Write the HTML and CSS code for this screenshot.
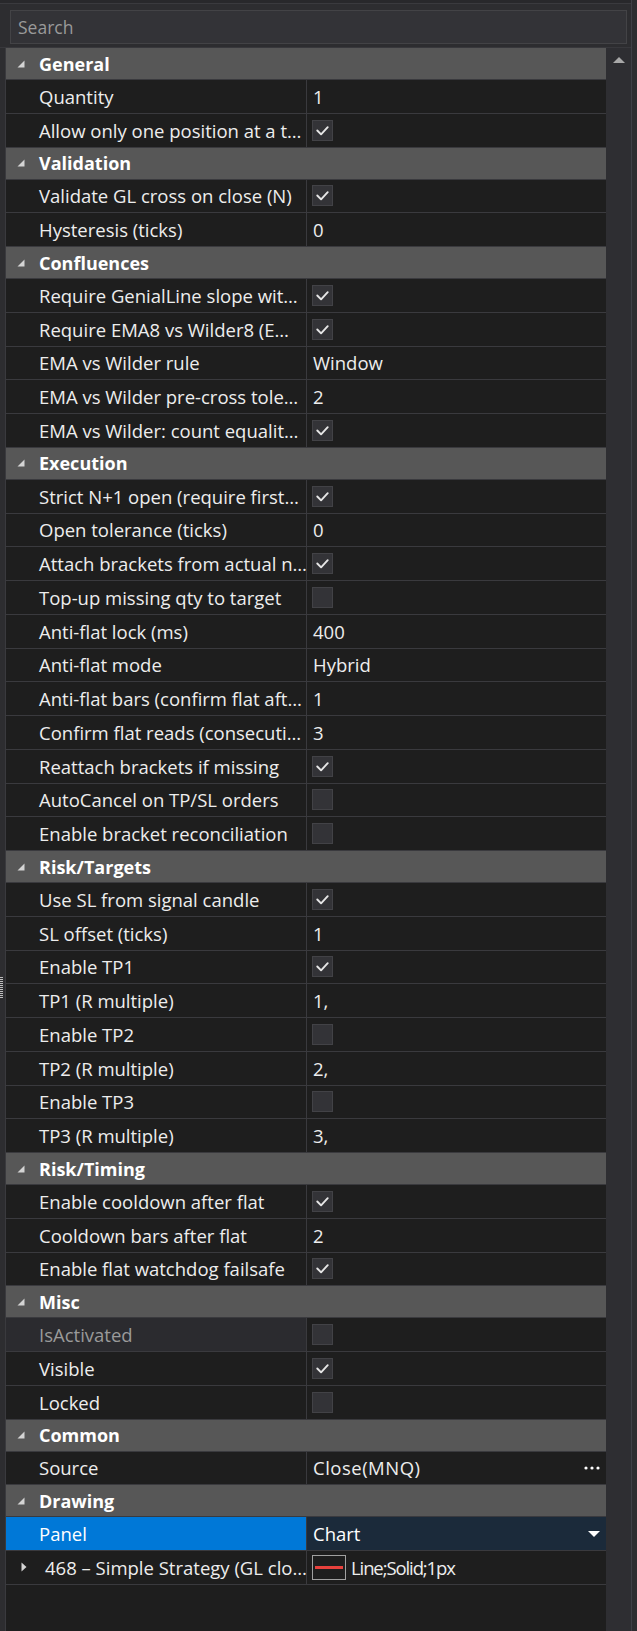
FILE: index.html
```html
<!DOCTYPE html>
<html lang="en">
<head>
<meta charset="utf-8">
<title>Properties</title>
<link rel="stylesheet" href="styles.css">
</head>
<body>
<div class="window">
  <div class="content">
    <div class="topbar"></div>
    <div class="search-wrap"><div class="search">Search</div></div>
    <div class="main">
      <div class="splitter"><div class="grip"></div></div>
      <div class="grid">
        <div class="cat"><svg class="tri" width="8" height="8" viewBox="0 0 8 8"><path d="M7.5 0.5 L7.5 7.5 L0.5 7.5 Z"/></svg>General</div>
        <div class="row"><div class="name">Quantity</div><div class="val">1</div></div>
        <div class="row"><div class="name">Allow only one position at a t…</div><div class="val"><span class="cb on"><svg viewBox="0 0 20 20"><polyline points="4.5,10 8.5,14 15.5,6.5"/></svg></span></div></div>

        <div class="cat"><svg class="tri" width="8" height="8" viewBox="0 0 8 8"><path d="M7.5 0.5 L7.5 7.5 L0.5 7.5 Z"/></svg>Validation</div>
        <div class="row"><div class="name">Validate GL cross on close (N)</div><div class="val"><span class="cb on"><svg viewBox="0 0 20 20"><polyline points="4.5,10 8.5,14 15.5,6.5"/></svg></span></div></div>
        <div class="row"><div class="name">Hysteresis (ticks)</div><div class="val">0</div></div>

        <div class="cat"><svg class="tri" width="8" height="8" viewBox="0 0 8 8"><path d="M7.5 0.5 L7.5 7.5 L0.5 7.5 Z"/></svg>Confluences</div>
        <div class="row"><div class="name">Require GenialLine slope wit…</div><div class="val"><span class="cb on"><svg viewBox="0 0 20 20"><polyline points="4.5,10 8.5,14 15.5,6.5"/></svg></span></div></div>
        <div class="row"><div class="name">Require EMA8 vs Wilder8 (E…</div><div class="val"><span class="cb on"><svg viewBox="0 0 20 20"><polyline points="4.5,10 8.5,14 15.5,6.5"/></svg></span></div></div>
        <div class="row"><div class="name">EMA vs Wilder rule</div><div class="val">Window</div></div>
        <div class="row"><div class="name">EMA vs Wilder pre-cross tole…</div><div class="val">2</div></div>
        <div class="row"><div class="name">EMA vs Wilder: count equalit…</div><div class="val"><span class="cb on"><svg viewBox="0 0 20 20"><polyline points="4.5,10 8.5,14 15.5,6.5"/></svg></span></div></div>

        <div class="cat"><svg class="tri" width="8" height="8" viewBox="0 0 8 8"><path d="M7.5 0.5 L7.5 7.5 L0.5 7.5 Z"/></svg>Execution</div>
        <div class="row"><div class="name">Strict N+1 open (require first…</div><div class="val"><span class="cb on"><svg viewBox="0 0 20 20"><polyline points="4.5,10 8.5,14 15.5,6.5"/></svg></span></div></div>
        <div class="row"><div class="name">Open tolerance (ticks)</div><div class="val">0</div></div>
        <div class="row"><div class="name">Attach brackets from actual n…</div><div class="val"><span class="cb on"><svg viewBox="0 0 20 20"><polyline points="4.5,10 8.5,14 15.5,6.5"/></svg></span></div></div>
        <div class="row"><div class="name">Top-up missing qty to target</div><div class="val"><span class="cb"></span></div></div>
        <div class="row"><div class="name">Anti-flat lock (ms)</div><div class="val">400</div></div>
        <div class="row"><div class="name">Anti-flat mode</div><div class="val">Hybrid</div></div>
        <div class="row"><div class="name">Anti-flat bars (confirm flat aft…</div><div class="val">1</div></div>
        <div class="row"><div class="name">Confirm flat reads (consecuti…</div><div class="val">3</div></div>
        <div class="row"><div class="name">Reattach brackets if missing</div><div class="val"><span class="cb on"><svg viewBox="0 0 20 20"><polyline points="4.5,10 8.5,14 15.5,6.5"/></svg></span></div></div>
        <div class="row"><div class="name">AutoCancel on TP/SL orders</div><div class="val"><span class="cb"></span></div></div>
        <div class="row"><div class="name">Enable bracket reconciliation</div><div class="val"><span class="cb"></span></div></div>

        <div class="cat"><svg class="tri" width="8" height="8" viewBox="0 0 8 8"><path d="M7.5 0.5 L7.5 7.5 L0.5 7.5 Z"/></svg>Risk/Targets</div>
        <div class="row"><div class="name">Use SL from signal candle</div><div class="val"><span class="cb on"><svg viewBox="0 0 20 20"><polyline points="4.5,10 8.5,14 15.5,6.5"/></svg></span></div></div>
        <div class="row"><div class="name">SL offset (ticks)</div><div class="val">1</div></div>
        <div class="row"><div class="name">Enable TP1</div><div class="val"><span class="cb on"><svg viewBox="0 0 20 20"><polyline points="4.5,10 8.5,14 15.5,6.5"/></svg></span></div></div>
        <div class="row"><div class="name">TP1 (R multiple)</div><div class="val">1,</div></div>
        <div class="row"><div class="name">Enable TP2</div><div class="val"><span class="cb"></span></div></div>
        <div class="row"><div class="name">TP2 (R multiple)</div><div class="val">2,</div></div>
        <div class="row"><div class="name">Enable TP3</div><div class="val"><span class="cb"></span></div></div>
        <div class="row"><div class="name">TP3 (R multiple)</div><div class="val">3,</div></div>

        <div class="cat"><svg class="tri" width="8" height="8" viewBox="0 0 8 8"><path d="M7.5 0.5 L7.5 7.5 L0.5 7.5 Z"/></svg>Risk/Timing</div>
        <div class="row"><div class="name">Enable cooldown after flat</div><div class="val"><span class="cb on"><svg viewBox="0 0 20 20"><polyline points="4.5,10 8.5,14 15.5,6.5"/></svg></span></div></div>
        <div class="row"><div class="name">Cooldown bars after flat</div><div class="val">2</div></div>
        <div class="row"><div class="name">Enable flat watchdog failsafe</div><div class="val"><span class="cb on"><svg viewBox="0 0 20 20"><polyline points="4.5,10 8.5,14 15.5,6.5"/></svg></span></div></div>

        <div class="cat"><svg class="tri" width="8" height="8" viewBox="0 0 8 8"><path d="M7.5 0.5 L7.5 7.5 L0.5 7.5 Z"/></svg>Misc</div>
        <div class="row"><div class="name disabled">IsActivated</div><div class="val"><span class="cb"></span></div></div>
        <div class="row"><div class="name">Visible</div><div class="val"><span class="cb on"><svg viewBox="0 0 20 20"><polyline points="4.5,10 8.5,14 15.5,6.5"/></svg></span></div></div>
        <div class="row"><div class="name">Locked</div><div class="val"><span class="cb"></span></div></div>

        <div class="cat"><svg class="tri" width="8" height="8" viewBox="0 0 8 8"><path d="M7.5 0.5 L7.5 7.5 L0.5 7.5 Z"/></svg>Common</div>
        <div class="row"><div class="name">Source</div><div class="val"><span class="grow wide">Close(MNQ)</span><svg class="dots" width="16" height="4" viewBox="0 0 16 4"><circle cx="2" cy="2" r="1.6"/><circle cx="8" cy="2" r="1.6"/><circle cx="14" cy="2" r="1.6"/></svg></div></div>

        <div class="cat"><svg class="tri" width="8" height="8" viewBox="0 0 8 8"><path d="M7.5 0.5 L7.5 7.5 L0.5 7.5 Z"/></svg>Drawing</div>
        <div class="row selected"><div class="name">Panel</div><div class="val"><span class="grow">Chart</span><svg class="drop" width="12" height="6" viewBox="0 0 12 6"><path d="M0 0 L12 0 L6 6 Z"/></svg></div></div>
        <div class="row"><div class="name expand"><svg class="caret" width="6" height="10" viewBox="0 0 6 10"><path d="M0.5 0.5 L5.5 5 L0.5 9.5 Z"/></svg>468 – Simple Strategy (GL clo…</div><div class="val"><span class="swatch"><span class="swatch-line"></span></span><span class="tight">Line;Solid;1px</span></div></div>
      </div>
      <div class="scrollbar"><svg class="up" width="12" height="6" viewBox="0 0 12 6"><path d="M6 0 L12 6 L0 6 Z"/></svg></div>
    </div>
  </div>
  <div class="edge"></div>
  <div class="outer"></div>
</div>
</body>
</html>
```
FILE: styles.css
```css
* { box-sizing: border-box; margin: 0; padding: 0; }
html, body { margin: 0; background: #2d2d30; }
body {
  width: 637px;
  height: 1631px;
  overflow: hidden;
  font-family: "Open Sans", "Noto Sans", sans-serif;
  font-size: 18.5px;
  color: #ededed;
}
.window { display: flex; width: 637px; height: 1631px; }
.content { width: 631px; display: flex; flex-direction: column; }
.edge { width: 1px; background: #3f3f46; }
.outer { width: 5px; background: #2d2d30; }

.topbar { height: 4px; background: #28282b; border-bottom: 1px solid #3a3a3e; }
.search-wrap { height: 44px; padding: 6px 4px 4px 10px; border-bottom: 1px solid #38383c; }
.search {
  height: 34px;
  border: 1px solid #434346;
  background: #333337;
  color: #9a9a9a;
  font-size: 17.5px;
  padding-left: 7px;
  display: flex;
  align-items: center;
}

.main { flex: 1; display: flex; min-height: 0; }
.splitter { width: 6px; background: #2d2d30; border-right: 1px solid #3a3a3e; }
.grip {
  width: 3px;
  height: 21px;
  margin-top: 929px;
  background: repeating-linear-gradient(to bottom, #bdbdbd 0 1px, transparent 1px 2px);
}
.grid { width: 600px; background: #1e1e1e; }
.scrollbar { width: 25px; background: #2e2e32; display: flex; justify-content: center; align-items: flex-start; }
.up { margin-top: 9px; fill: #a8a8a8; }

.cat {
  height: 32px;
  background: #575757;
  border-bottom: 1px solid #3a3a3e;
  display: flex;
  align-items: center;
  padding-left: 11px;
  font-size: 18px;
  font-weight: 700;
  color: #ffffff;
}
.tri { margin-right: 14px; fill: #d4d4d4; flex: none; }

.row {
  height: 33.75px;
  display: flex;
  border-bottom: 1px solid #3a3a3e;
}
.name {
  width: 301px;
  flex: none;
  border-right: 1px solid #3a3a3e;
  padding-left: 33px;
  display: flex;
  align-items: center;
  white-space: nowrap;
  overflow: hidden;
}
.name.disabled { background: #2b2b2f; color: #9a9a9a; }
.name.expand { padding-left: 15px; }
.caret { fill: #d4d4d4; margin-right: 18px; flex: none; }
.val {
  flex: 1;
  padding-left: 6px;
  padding-right: 5px;
  display: flex;
  align-items: center;
  white-space: nowrap;
}
.grow { flex: 1; }
.wide { letter-spacing: 0.5px; }
.tight { letter-spacing: -1.1px; }
.dots { fill: #ffffff; margin-right: 1px; }
.drop { fill: #ffffff; margin-right: 1px; }

.row.selected .name { background: #0078d7; color: #ffffff; }
.row.selected .val { background: #1b2a3a; color: #ffffff; }

.cb {
  width: 21px;
  height: 21px;
  margin-left: -1px;
  background: #333337;
  border: 1px solid #424246;
  display: block;
  flex: none;
}
.cb svg { width: 19px; height: 19px; display: block; fill: none; stroke: #e6e6e6; stroke-width: 2; stroke-linecap: round; stroke-linejoin: round; }

.swatch {
  width: 34px;
  height: 25px;
  margin-left: -1px;
  margin-right: 5px;
  border: 1px solid #a0a0a0;
  background: #1e1e1e;
  display: flex;
  align-items: center;
  padding: 0 2px;
  flex: none;
}
.swatch-line { height: 3px; flex: 1; background: #e8413c; }
```
